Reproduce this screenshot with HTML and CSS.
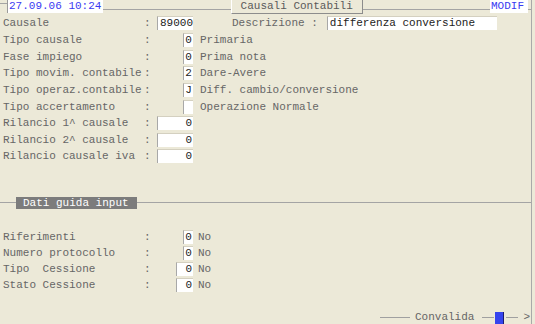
FILE: index.html
```html
<!DOCTYPE html>
<html>
<head>
    <meta charset="UTF-8">
    <title>Causali Contabili</title>
    <link rel="stylesheet" href="styles.css">
</head>
<body>
<div class="screen">

    <div class="topbar">
        <span class="rule lead"></span>
        <span class="clock">27.09.06 10:24</span>
        <span class="rule"></span>
        <span class="title">Causali Contabili</span>
        <span class="rule"></span>
        <span class="mode">MODIF</span>
        <span class="rule tail"></span>
    </div>

    <div class="fields">
        <div class="row">
            <span class="lbl">Causale</span><span class="colon">:</span>
            <span class="slot"><span class="fld wide left">89000</span></span>
            <span class="desc-lbl">Descrizione :</span>
            <span class="fld text">differenza conversione</span>
        </div>
        <div class="row">
            <span class="lbl">Tipo causale</span><span class="colon">:</span>
            <span class="slot"><span class="fld">0</span></span>
            <span class="note">Primaria</span>
        </div>
        <div class="row">
            <span class="lbl">Fase impiego</span><span class="colon">:</span>
            <span class="slot"><span class="fld">0</span></span>
            <span class="note">Prima nota</span>
        </div>
        <div class="row">
            <span class="lbl">Tipo movim. contabile</span><span class="colon">:</span>
            <span class="slot"><span class="fld">2</span></span>
            <span class="note">Dare-Avere</span>
        </div>
        <div class="row">
            <span class="lbl">Tipo operaz.contabile</span><span class="colon">:</span>
            <span class="slot"><span class="fld">J</span></span>
            <span class="note">Diff. cambio/conversione</span>
        </div>
        <div class="row">
            <span class="lbl">Tipo accertamento</span><span class="colon">:</span>
            <span class="slot"><span class="fld"></span></span>
            <span class="note">Operazione Normale</span>
        </div>
        <div class="row">
            <span class="lbl">Rilancio 1^ causale</span><span class="colon">:</span>
            <span class="slot"><span class="fld wide">0</span></span>
        </div>
        <div class="row">
            <span class="lbl">Rilancio 2^ causale</span><span class="colon">:</span>
            <span class="slot"><span class="fld wide">0</span></span>
        </div>
        <div class="row">
            <span class="lbl">Rilancio causale iva</span><span class="colon">:</span>
            <span class="slot"><span class="fld wide">0</span></span>
        </div>
    </div>

    <div class="section">
        <span class="section-title">Dati guida input</span>
    </div>

    <div class="fields lower">
        <div class="row">
            <span class="lbl">Riferimenti</span><span class="colon">:</span>
            <span class="slot"><span class="fld">0</span></span>
            <span class="note">No</span>
        </div>
        <div class="row">
            <span class="lbl">Numero protocollo</span><span class="colon">:</span>
            <span class="slot"><span class="fld">0</span></span>
            <span class="note">No</span>
        </div>
        <div class="row">
            <span class="lbl">Tipo  Cessione</span><span class="colon">:</span>
            <span class="slot"><span class="fld mid">0</span></span>
            <span class="note">No</span>
        </div>
        <div class="row">
            <span class="lbl">Stato Cessione</span><span class="colon">:</span>
            <span class="slot"><span class="fld mid">0</span></span>
            <span class="note">No</span>
        </div>
    </div>

    <div class="footer">
        <span class="rule foot-a"></span>
        <span class="action">Convalida</span>
        <span class="rule foot-b"></span>
        <span class="cursor"></span>
        <span class="rule foot-c"></span>
        <span class="next">&gt;</span>
    </div>

</div>
</body>
</html>
```

FILE: styles.css
```css
html, body {
    margin: 0;
    padding: 0;
    background: #ece9d8;
}

body {
    font-family: "Liberation Mono", "DejaVu Sans Mono", monospace;
    font-size: 11px;
    color: #666;
}

.screen {
    width: 532px;
    height: 324px;
    border-right: 1px solid #a9a9a9;
    box-sizing: border-box;
    display: flex;
    flex-direction: column;
}

/* top bar */

.topbar {
    display: flex;
    align-items: flex-start;
    height: 14px;
}

.rule {
    flex: 1;
    height: 9px;
    border-bottom: 1px solid #a4a4a4;
}

.rule.lead {
    flex: 0 0 7px;
    height: 3px;
}

.rule.tail {
    flex: 0 0 3px;
}

.clock {
    background: #fff;
    color: #3a3af2;
    height: 13px;
    line-height: 13px;
    padding: 0 2px 0 1px;
    border-left: 1px solid #9a9a9a;
}

.title {
    height: 13px;
    line-height: 13px;
    padding: 0 9px;
    border-left: 1px solid #fff;
    border-right: 1px solid #8c8c8c;
    border-bottom: 1px solid #8c8c8c;
    color: #5a5a5a;
}

.mode {
    background: #fff;
    color: #3a3af2;
    height: 13px;
    line-height: 13px;
    padding: 0 4px 0 1px;
}

/* fields */

.fields {
    padding-left: 3px;
}

.row {
    display: flex;
    align-items: center;
    height: 16.6px;
}

.row:first-child {
    height: 18px;
}

.lbl {
    width: 141px;
    white-space: pre;
}

.colon {
    width: 13px;
}

.slot {
    width: 36px;
    display: flex;
    justify-content: flex-end;
}

.fld {
    display: inline-block;
    box-sizing: border-box;
    width: 10px;
    height: 14px;
    line-height: 13px;
    background: #fff;
    border-left: 1px solid #a8a8a8;
    border-top: 1px solid #d4d0c0;
    color: #222;
    text-align: center;
    white-space: pre;
}

.fld.wide {
    width: 36px;
    text-align: right;
    padding-right: 1px;
}

.fld.mid {
    width: 17px;
    text-align: right;
    padding-right: 1px;
}

.fld.left {
    text-align: left;
    padding-left: 2px;
}

.fld.text {
    width: 170px;
    text-align: left;
    padding-left: 2px;
}

.desc-lbl {
    margin-left: 39px;
    margin-right: 9px;
    white-space: pre;
}

.note {
    margin-left: 7px;
}

/* section */

.section {
    margin-top: 31px;
    height: 14px;
    display: flex;
    align-items: center;
    background: linear-gradient(#ece9d8 6px, #a4a4a4 6px, #a4a4a4 7px, #ece9d8 7px);
}

.section-title {
    margin-left: 16px;
    padding: 0 8px 0 7px;
    height: 12px;
    line-height: 12px;
    background: #7c7c7c;
    color: #fff;
}

.lower {
    margin-top: 19px;
}

.lower .row {
    height: 16px;
}

.lower .note {
    margin-left: 5px;
}

/* footer */

.footer {
    margin-top: auto;
    display: flex;
    align-items: flex-start;
    height: 13px;
    padding-left: 380px;
}

.footer .rule {
    height: 6px;
    border-bottom-color: #a0a0a0;
}

.rule.foot-a {
    flex: 0 0 30px;
}

.rule.foot-b {
    flex: 0 0 12px;
}

.rule.foot-c {
    flex: 0 0 12px;
    margin-left: 2px;
}

.action {
    padding: 0 8px 0 5px;
    line-height: 13px;
}

.cursor {
    width: 8px;
    height: 12px;
    margin-left: 1px;
    margin-top: 1px;
    background: #3544ee;
    border-right: 1px solid #1a1a70;
}

.next {
    margin-left: 5px;
    line-height: 13px;
}
```
